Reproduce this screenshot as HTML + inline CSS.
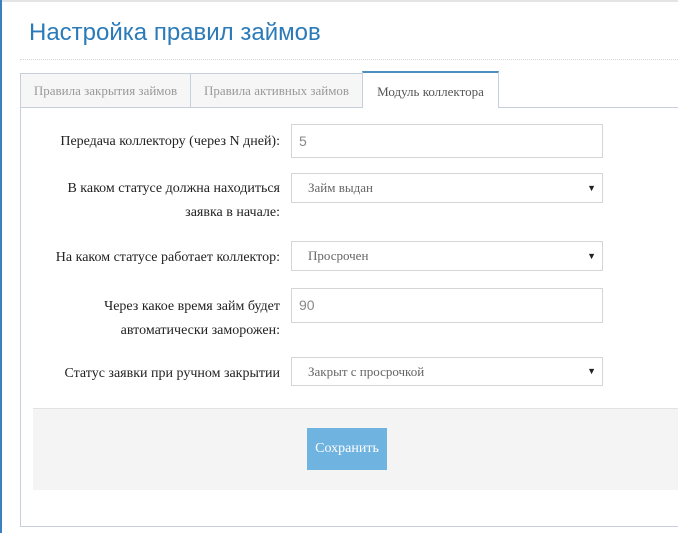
<!DOCTYPE html>
<html><head><meta charset="utf-8"><style>
*{box-sizing:border-box;margin:0;padding:0}
body{width:678px;height:533px;background:#fff;position:relative;overflow:hidden;font-family:"Liberation Serif",serif;}
.lb{position:absolute;left:0;top:0;width:2px;height:533px;background:#3a7fc0}
.tl{position:absolute;left:0;top:0;width:678px;height:2px;background:#e4e4e4}
h1{position:absolute;left:29px;top:19px;font:normal 24px "Liberation Sans",sans-serif;color:#2b7bb9;}
.dot{position:absolute;left:20px;right:0;top:59px;border-top:1px dotted #d5d5d5}
.tab{position:absolute;top:73px;height:35px;border:1px solid #c5d0dc;background:#f6f6f6;color:#999;font-size:13px;line-height:34px;text-align:center}
.tab.a{background:#fff;color:#555;border-top:2px solid #4c8fbd;top:71px;height:37px;border-bottom:none;line-height:37px}
.box{position:absolute;left:20px;top:107px;width:670px;height:420px;border:1px solid #c5d0dc}
.lab{position:absolute;right:398px;text-align:right;font-size:14px;color:#222;line-height:24px;white-space:nowrap}
.in{position:absolute;left:291px;width:312px;border:1px solid #d5d5d5;background:#fff;font:14px "Liberation Sans",sans-serif;color:#888;padding-left:7px}
.sel{font-family:"Liberation Serif",serif;font-size:13px;padding-left:16px;color:#666}
.sel:after{content:"▼";position:absolute;right:6px;top:0;font-size:9px;color:#222}
.ft{position:absolute;left:33px;top:408px;width:660px;height:82px;background:#f4f4f4;border-top:1px solid #e2e2e2}
.btn{position:absolute;left:307px;top:428px;width:80px;height:42px;background:#6fb3e0;color:#fff;font-size:14px;text-align:center;line-height:42px}
</style></head><body>
<div class="tl"></div><div class="lb"></div>
<h1>Настройка правил займов</h1>
<div class="dot"></div>
<div class="box"></div>
<div class="tab" style="left:20px;width:171px">Правила закрытия займов</div>
<div class="tab" style="left:190px;width:173px">Правила активных займов</div>
<div class="tab a" style="left:362px;width:137px">Модуль коллектора</div>
<div class="lab" style="top:130px">Передача коллектору (через N дней):</div>
<div class="in" style="top:124px;height:34px;line-height:32px">5</div>
<div class="lab" style="top:177px">В каком статусе должна находиться<br>заявка в начале:</div>
<div class="in sel" style="top:173px;height:30px;line-height:28px">Займ выдан</div>
<div class="lab" style="top:246px">На каком статусе работает коллектор:</div>
<div class="in sel" style="top:241px;height:30px;line-height:28px">Просрочен</div>
<div class="lab" style="top:295px">Через какое время займ будет<br>автоматически заморожен:</div>
<div class="in" style="top:288px;height:35px;line-height:32px">90</div>
<div class="lab" style="top:362px">Статус заявки при ручном закрытии</div>
<div class="in sel" style="top:357px;height:29px;line-height:27px">Закрыт с просрочкой</div>
<div class="ft"></div>
<div class="btn">Сохранить</div>
</body></html>
